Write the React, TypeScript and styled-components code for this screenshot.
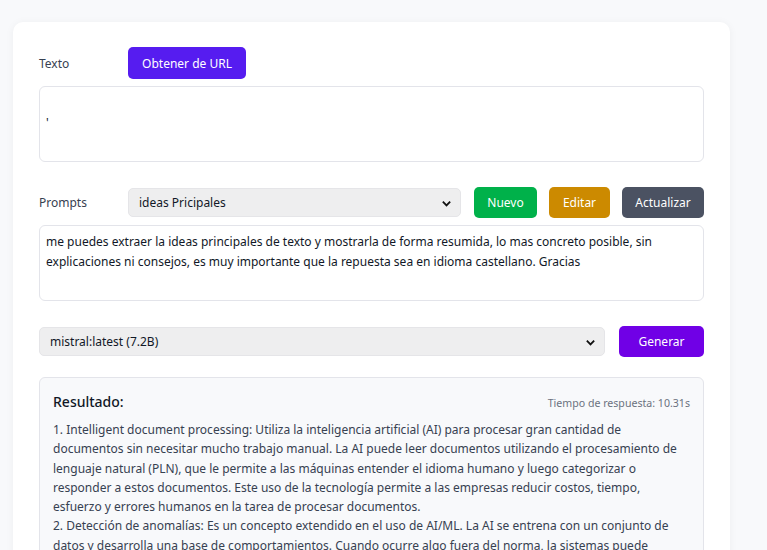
import React from "react";
import styled, { createGlobalStyle } from "styled-components";

const GlobalStyle = createGlobalStyle`
  html, body {
    margin: 0;
    padding: 0;
    background: #f8f9fb;
    font-family: "Noto Sans", "DejaVu Sans", sans-serif;
    color: #1f2937;
  }
  * { box-sizing: border-box; }
`;

const Page = styled.div`
  padding: 22px 0 0 13px;
  height: 550px;
  overflow: hidden;
`;

const Card = styled.div`
  width: 717px;
  min-height: 560px;
  background: #ffffff;
  border-radius: 10px;
  box-shadow: 0 1px 8px rgba(0, 0, 0, 0.05);
  padding: 25px 26px 0 26px;
`;

const Row = styled.div<{ $gap?: number; $mt?: number }>`
  display: flex;
  align-items: center;
  gap: ${(p) => p.$gap ?? 0}px;
  margin-top: ${(p) => p.$mt ?? 0}px;
`;

const Label = styled.label`
  width: 89px;
  flex: none;
  font-size: 12px;
  color: #374151;
`;

const Buttons = styled.div`
  display: flex;
  gap: 12px;
  margin-left: 13px;
`;

const Button = styled.button<{ $bg: string; $w: number; $h?: number }>`
  flex: none;
  width: ${(p) => p.$w}px;
  height: ${(p) => p.$h ?? 31}px;
  border: none;
  border-radius: 5px;
  background: ${(p) => p.$bg};
  color: #ffffff;
  font-family: inherit;
  font-size: 12px;
  padding: 0;
  cursor: pointer;
`;

const Area = styled.textarea<{ $mt: number }>`
  display: block;
  width: 100%;
  height: 76px;
  margin-top: ${(p) => p.$mt}px;
  border: 1px solid #e3e4ea;
  border-radius: 6px;
  padding: 6px 6px;
  font-family: inherit;
  font-size: 12px;
  line-height: 20px;
  color: #111827;
  resize: none;
  outline: none;
`;

const SelectBox = styled.div<{ $w: number }>`
  position: relative;
  flex: none;
  width: ${(p) => p.$w}px;
  height: 29px;
  background: #eeeeef;
  border: 1px solid #e5e5e8;
  border-radius: 5px;
  display: flex;
  align-items: center;
  padding-left: 10px;
  font-size: 12px;
  color: #111827;
`;

const Chevron = styled.svg`
  position: absolute;
  right: 8px;
  top: 9px;
`;

const Result = styled.div`
  margin-top: 20px;
  background: #f8f9fb;
  border: 1px solid #e3e4ea;
  border-radius: 6px;
  padding: 14px 13px 20px 13px;
`;

const ResultHead = styled.div`
  display: flex;
  justify-content: space-between;
  align-items: baseline;
`;

const ResultTitle = styled.h3`
  margin: 0;
  font-size: 14px;
  font-weight: 500;
  color: #111827;
`;

const Time = styled.span`
  font-size: 10.6px;
  color: #6b7280;
`;

const ResultText = styled.div`
  margin-top: 9px;
  font-size: 12px;
  line-height: 19.3px;
  color: #374151;
  white-space: pre-line;
`;

const Select = ({ w, value }: { w: number; value: string }) => (
  <SelectBox $w={w}>
    {value}
    <Chevron width="11" height="11" viewBox="0 0 24 24">
      <path d="M4 8l8 8 8-8" fill="none" stroke="#111" strokeWidth="4" />
    </Chevron>
  </SelectBox>
);

const resultado = `1. Intelligent document processing: Utiliza la inteligencia artificial (AI) para procesar gran cantidad de documentos sin necesitar mucho trabajo manual. La AI puede leer documentos utilizando el procesamiento de lenguaje natural (PLN), que le permite a las máquinas entender el idioma humano y luego categorizar o responder a estos documentos. Este uso de la tecnología permite a las empresas reducir costos, tiempo, esfuerzo y errores humanos en la tarea de procesar documentos.
2. Detección de anomalías: Es un concepto extendido en el uso de AI/ML. La AI se entrena con un conjunto de datos y desarrolla una base de comportamientos. Cuando ocurre algo fuera del norma, la sistemas puede detectarlo y alertar.`;

export default function App() {
  return (
    <Page>
      <GlobalStyle />
      <Card>
        <Row>
          <Label>Texto</Label>
          <Button $bg="#561cf0" $w={118} $h={32}>
            Obtener de URL
          </Button>
        </Row>
        <Area $mt={7} defaultValue={"\n'"} />

        <Row $mt={25}>
          <Label>Prompts</Label>
          <Select w={333} value="ideas Pricipales" />
          <Buttons>
            <Button $bg="#00b14a" $w={63}>Nuevo</Button>
            <Button $bg="#cc8a00" $w={61}>Editar</Button>
            <Button $bg="#4b5262" $w={82}>Actualizar</Button>
          </Buttons>
        </Row>
        <Area
          $mt={7}
          defaultValue="me puedes extraer la ideas principales de texto y mostrarla de forma resumida, lo mas concreto posible, sin explicaciones ni consejos, es muy importante que la repuesta sea en idioma castellano. Gracias"
        />

        <Row $mt={25} $gap={14}>
          <Select w={566} value="mistral:latest (7.2B)" />
          <Button $bg="#7000e6" $w={85}>Generar</Button>
        </Row>

        <Result>
          <ResultHead>
            <ResultTitle>Resultado:</ResultTitle>
            <Time>Tiempo de respuesta: 10.31s</Time>
          </ResultHead>
          <ResultText>{resultado}</ResultText>
        </Result>
      </Card>
    </Page>
  );
}
